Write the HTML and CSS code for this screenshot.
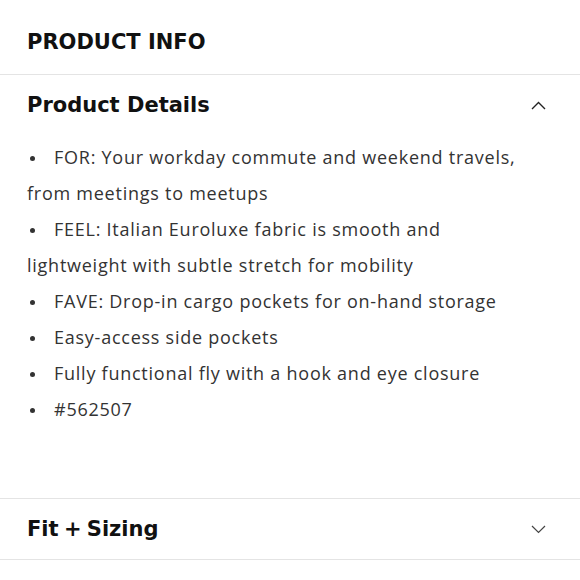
FILE: index.html
```html
<!DOCTYPE html>
<html>
<head>
<meta charset="utf-8">
<link rel="stylesheet" href="styles.css">
</head>
<body>
<div class="page">
  <h1 class="title">PRODUCT INFO</h1>
  <section class="panel open">
    <div class="panel-head">
      <h2>Product Details</h2>
      <svg class="chev" width="15" height="9" viewBox="0 0 15 9"><path d="M1 8 L7.5 1.5 L14 8" fill="none" stroke="#222" stroke-width="1.4"/></svg>
    </div>
    <ul class="details">
      <li><span class="dot"></span>FOR: Your workday commute and weekend travels, from meetings to meetups</li>
      <li><span class="dot"></span>FEEL: Italian Euroluxe fabric is smooth and lightweight with subtle stretch for mobility</li>
      <li><span class="dot"></span>FAVE: Drop-in cargo pockets for on-hand storage</li>
      <li><span class="dot"></span>Easy-access side pockets</li>
      <li><span class="dot"></span>Fully functional fly with a hook and eye closure</li>
      <li><span class="dot"></span>#562507</li>
    </ul>
  </section>
  <section class="panel">
    <div class="panel-head">
      <h2 class="tight">Fit + Sizing</h2>
      <svg class="chev" width="15" height="9" viewBox="0 0 15 9"><path d="M1 1 L7.5 7.5 L14 1" fill="none" stroke="#444" stroke-width="1.2"/></svg>
    </div>
  </section>
</div>
</body>
</html>
```

FILE: styles.css
```css
html, body {
  margin: 0;
  padding: 0;
  background: #fff;
}
body {
  font-family: "DejaVu Sans", "Open Sans", sans-serif;
  color: #111;
}
.page {
  width: 580px;
}
.title {
  margin: 0;
  font-size: 21px;
  font-weight: 700;
  line-height: 28px;
  padding: 28px 27px 18px;
  border-bottom: 1px solid #e4e4e4;
}
.panel {
  border-bottom: 1px solid #e4e4e4;
}
.panel-head {
  display: flex;
  align-items: center;
  justify-content: space-between;
  padding: 15px 34px 15px 27px;
}
.panel-head h2 {
  margin: 0;
  font-size: 21px;
  font-weight: 700;
  line-height: 30px;
}
.panel-head h2.tight {
  word-spacing: -2px;
}
.chev {
  display: block;
}
.details {
  list-style: none;
  margin: 4px 0 0;
  padding: 0 40px 71px 27px;
  font-family: "Open Sans", "DejaVu Sans", sans-serif;
  font-size: 18px;
  letter-spacing: 0.75px;
  line-height: 36px;
  color: #333;
}
.dot {
  display: inline-block;
  width: 5px;
  height: 5px;
  border-radius: 50%;
  background: #333;
  margin: 0 19px 0 3px;
  vertical-align: middle;
  position: relative;
  top: -1px;
}
```
